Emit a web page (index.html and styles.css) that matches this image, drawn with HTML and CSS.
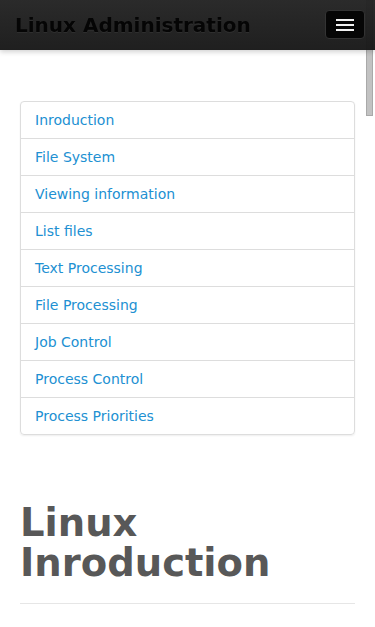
FILE: index.html
```html
<!DOCTYPE html>
<html>
<head>
<meta charset="utf-8">
<link rel="stylesheet" href="styles.css">
</head>
<body>
<div class="scroll-thumb"></div>
<header class="navbar">
  <a class="brand" href="#">Linux Administration</a>
  <button class="toggle" type="button" aria-label="Menu">
    <span class="bar"></span><span class="bar"></span><span class="bar"></span>
  </button>
</header>
<main class="content">
  <ul class="list-group">
    <li class="item"><a href="#">Inroduction</a></li>
    <li class="item"><a href="#">File System</a></li>
    <li class="item"><a href="#">Viewing information</a></li>
    <li class="item"><a href="#">List files</a></li>
    <li class="item"><a href="#">Text Processing</a></li>
    <li class="item"><a href="#">File Processing</a></li>
    <li class="item"><a href="#">Job Control</a></li>
    <li class="item"><a href="#">Process Control</a></li>
    <li class="item"><a href="#">Process Priorities</a></li>
  </ul>
  <h1 class="title">Linux Inroduction</h1>
  <hr class="rule">
</main>
</body>
</html>
```

FILE: styles.css
```css
html, body {
  margin: 0;
  padding: 0;
  background: #fff;
  overflow: hidden;
}
body {
  font-family: "DejaVu Sans", sans-serif;
  font-size: 14px;
  color: #555;
}
.scroll-thumb {
  position: fixed;
  top: 0;
  right: 2px;
  width: 5px;
  height: 114px;
  background: #c2c2c2;
  border: 1px solid #a9a9a9;
  z-index: 5;
}
.navbar {
  position: relative;
  z-index: 10;
  height: 50px;
  display: flex;
  align-items: center;
  justify-content: space-between;
  padding: 0 10px 0 15px;
  background: linear-gradient(to bottom, rgba(34,34,34,0.96), rgba(22,22,22,0.96));
  box-shadow: 0 2px 5px rgba(0,0,0,0.18);
}
.brand {
  font-weight: bold;
  font-size: 20px;
  color: #050505;
  text-decoration: none;
  text-shadow: 0 1px 0 rgba(255,255,255,0.05);
}
.toggle {
  width: 40px;
  height: 29px;
  margin-top: -1px;
  padding: 0;
  background: #060606;
  border: 1px solid #333;
  border-radius: 4px;
  display: flex;
  flex-direction: column;
  align-items: center;
  justify-content: center;
  gap: 3px;
}
.bar {
  display: block;
  width: 18px;
  height: 2px;
  background: #f2f2f2;
}
.content {
  padding: 51px 20px 0;
}
.list-group {
  list-style: none;
  margin: 0;
  padding: 0;
  border: 1px solid #ddd;
  border-radius: 4px;
  box-shadow: 0 1px 2px rgba(0,0,0,0.07);
}
.item {
  padding: 10px 14px;
  line-height: 16px;
  border-top: 1px solid #ddd;
}
.item:first-child {
  border-top: 0;
}
.item a {
  color: #2190d2;
  text-decoration: none;
}
.title {
  margin: 68px 0 0;
  font-size: 38.5px;
  line-height: 40px;
  font-weight: bold;
  color: #585858;
}
.rule {
  margin: 20px 0 0;
  border: 0;
  border-top: 1px solid #e6e6e6;
}
```
